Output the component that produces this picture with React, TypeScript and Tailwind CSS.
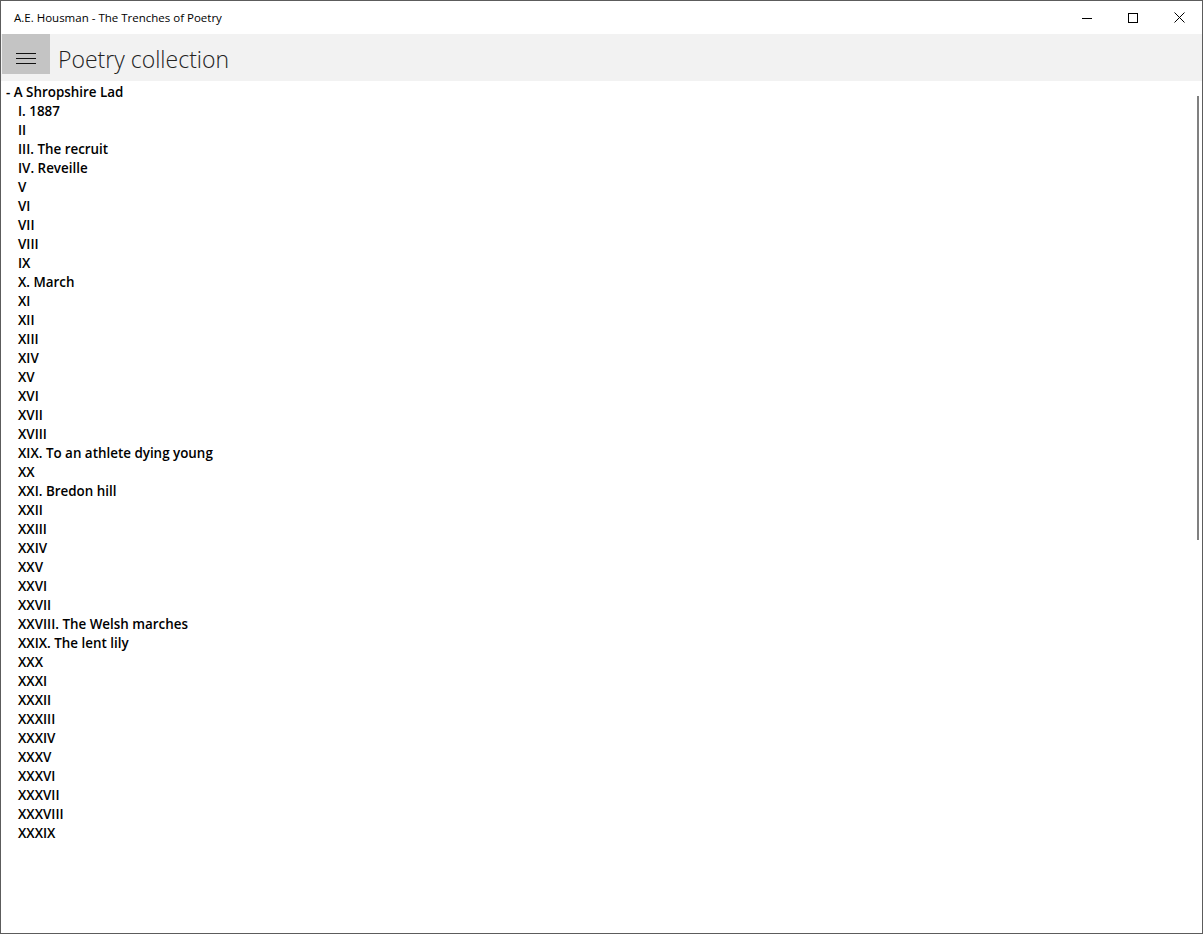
import React from "react";

const items = [
  "I. 1887","II","III. The recruit","IV. Reveille","V","VI","VII","VIII","IX","X. March","XI","XII","XIII","XIV","XV","XVI","XVII","XVIII","XIX. To an athlete dying young","XX","XXI. Bredon hill","XXII","XXIII","XXIV","XXV","XXVI","XXVII","XXVIII. The Welsh marches","XXIX. The lent lily","XXX","XXXI","XXXII","XXXIII","XXXIV","XXXV","XXXVI","XXXVII","XXXVIII","XXXIX",
];

export default function App() {
  const font = { fontFamily: '"Open Sans", "Noto Sans", sans-serif' };
  return (
    <div className="w-[1204px] h-[935px] bg-white overflow-hidden" style={font}>
      <div className="w-[1203px] h-[934px] border border-[#5c5c5c] flex flex-col">
        {/* Title bar */}
        <div className="h-[33px] flex items-center justify-between shrink-0">
          <div className="pl-[13px] text-[11.5px] text-black pt-[1px]">A.E. Housman - The Trenches of Poetry</div>
          <div className="flex h-full">
            <div className="w-[46px] h-full flex items-center justify-center">
              <svg width="10" height="10" viewBox="0 0 10 10"><path d="M0 5.5h10" stroke="#000" strokeWidth="1" /></svg>
            </div>
            <div className="w-[46px] h-full flex items-center justify-center">
              <svg width="10" height="10" viewBox="0 0 10 10"><rect x="0.5" y="0.5" width="9" height="9" fill="none" stroke="#000" strokeWidth="1" /></svg>
            </div>
            <div className="w-[46px] h-full flex items-center justify-center">
              <svg width="11" height="11" viewBox="0 0 11 11"><path d="M0.5 0.5L10.5 10.5M10.5 0.5L0.5 10.5" stroke="#000" strokeWidth="1" /></svg>
            </div>
          </div>
        </div>
        {/* Header */}
        <div className="h-[47px] bg-[#f2f2f2] flex items-start shrink-0">
          <div className="ml-[1px] w-[48px] h-[40px] bg-[#c4c4c4] flex justify-center pt-[19px]">
            <svg width="20" height="11" viewBox="0 0 20 11">
              <path d="M0 0.5h20M0 5.5h20M0 10.5h20" stroke="#111" strokeWidth="1" />
            </svg>
          </div>
          <div className="ml-[8px] mt-[9px] text-[23px] font-light text-[#222] leading-[32px]">
            Poetry collection
          </div>
        </div>
        {/* List */}
        <div className="relative flex-1 pt-[2px]">
          <div className="h-[19px] leading-[19px] pl-[5px] text-[13.4px] font-semibold text-black">- A Shropshire Lad</div>
          {items.map((t) => (
            <div key={t} className="h-[19px] leading-[19px] pl-[17px] text-[13.4px] font-semibold text-black">{t}</div>
          ))}
          <div className="absolute right-[3px] top-[15px] w-[2px] h-[444px] bg-[#808080]" />
        </div>
      </div>
    </div>
  );
}
